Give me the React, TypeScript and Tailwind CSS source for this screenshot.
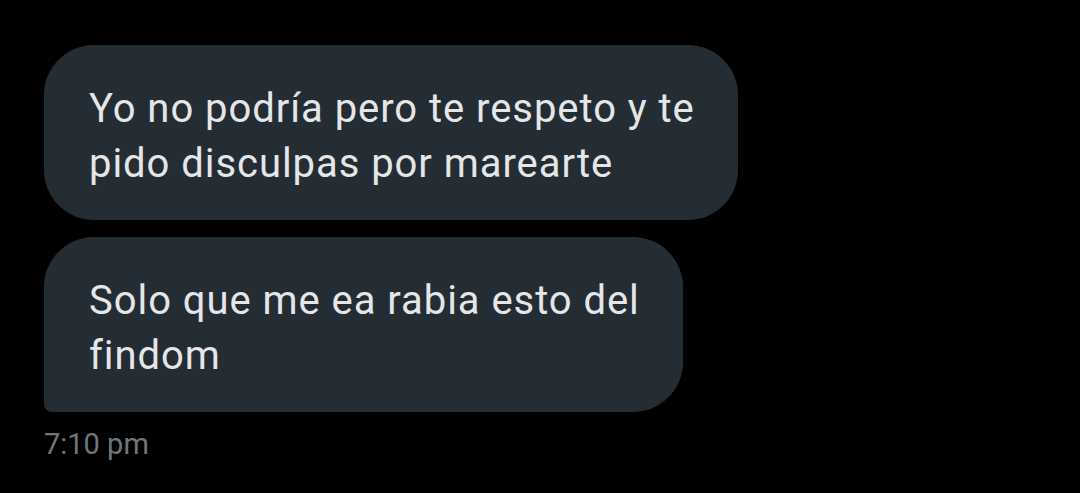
export default function App() {
  return (
    <div className="w-[1080px] h-[493px] bg-black pl-[44px] pt-[45px] font-['Roboto',sans-serif]">
      <div className="flex flex-col items-start gap-[17px]">
        <div className="w-[694px] rounded-[50px] bg-[#242c34] pl-[45px] pr-[30px] pt-[36px] pb-[29px] text-[40px] leading-[55px] tracking-[0.95px] text-[#e4e6e8]">
          Yo no podría pero te respeto y te pido disculpas por marearte
        </div>
        <div className="w-[639px] rounded-[50px] rounded-bl-[8px] bg-[#242c34] pl-[45px] pr-[30px] pt-[36px] pb-[29px] text-[40px] leading-[55px] tracking-[0.95px] text-[#e4e6e8]">
          Solo que me ea rabia esto del findom
        </div>
      </div>
      <p className="mt-[14px] text-[29px] leading-[36px] text-[#71767b]">7:10 pm</p>
    </div>
  );
}
